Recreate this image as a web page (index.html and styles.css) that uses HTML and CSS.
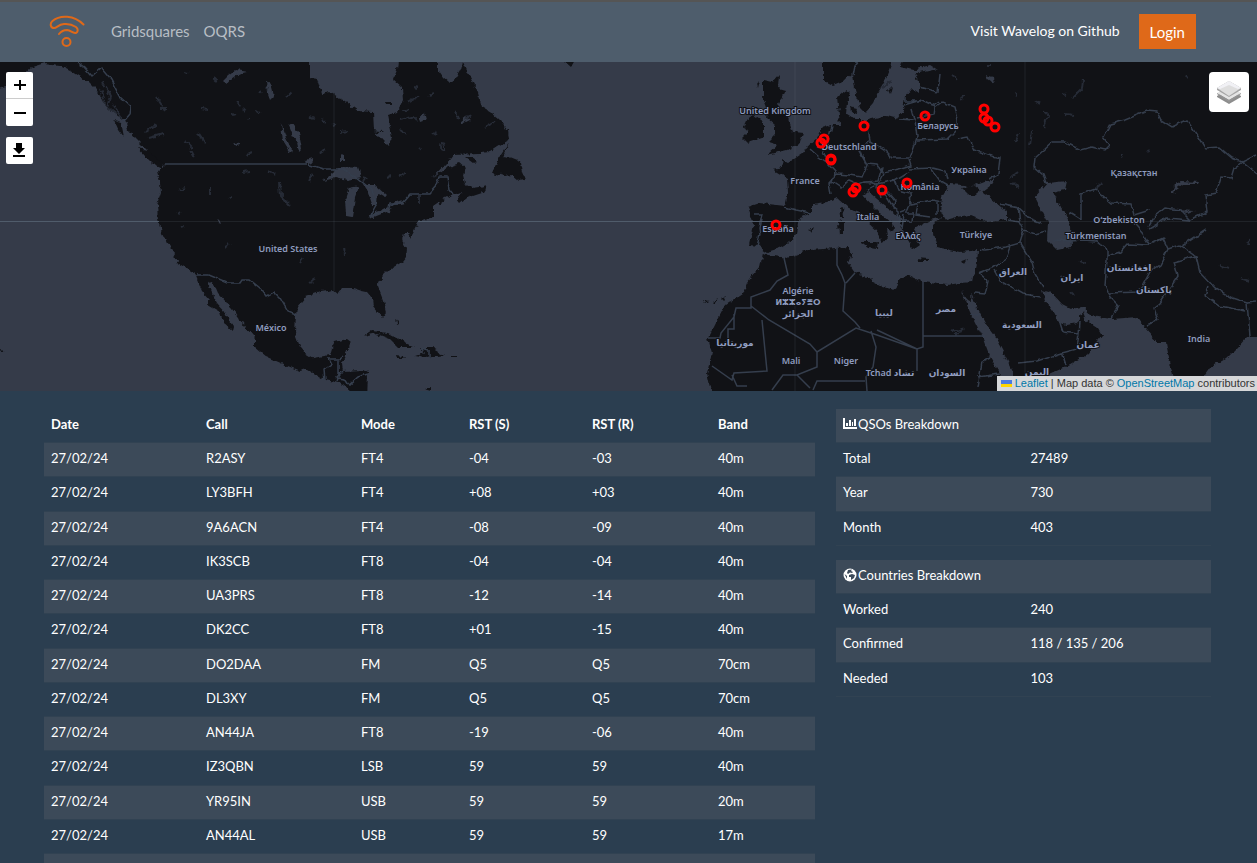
FILE: index.html
```html
<!DOCTYPE html>
<html lang="en">
<head>
<meta charset="utf-8">
<meta name="viewport" content="width=device-width, initial-scale=1">
<title>Wavelog</title>
<link rel="stylesheet" href="styles.css">
</head>
<body>
<header class="navbar">
  <a class="brand" href="#" aria-label="Wavelog">
    <svg width="36" height="34" viewBox="49 15 36 34" fill="none" stroke="#df6919" stroke-width="2" stroke-linecap="round"><path d="M83.500 24.500C74 15 60 14.500 52.500 21C49.500 23.500 50.500 28 54 28C57 28 58 24.500 64 24C69 23.500 73 25 76 27C79 29.500 77.500 33 75 33C72 33 71 30.500 67 30C63 30 61 31.500 59 34"/><circle cx="66.500" cy="42" r="4"/></svg>
  </a>
  <nav class="links"><a href="#">Gridsquares</a><a href="#">OQRS</a></nav>
  <a class="github" href="#">Visit Wavelog on Github</a>
  <button class="login" type="button">Login</button>
</header>

<section class="map" aria-label="Map">
  <svg class="world" viewBox="0 62 1257 329" preserveAspectRatio="xMidYMid slice">
    <defs>
      <filter id="coast" color-interpolation-filters="sRGB" filterUnits="userSpaceOnUse" x="-10" y="52" width="1280" height="350">
        <feTurbulence type="fractalNoise" baseFrequency="0.16" numOctaves="3" seed="4" result="n"/>
        <feDisplacementMap in="SourceGraphic" in2="n" scale="6" xChannelSelector="R" yChannelSelector="G"/>
        <feGaussianBlur stdDeviation="0.5"/>
      </filter>
      <filter id="border" color-interpolation-filters="sRGB" filterUnits="userSpaceOnUse" x="-10" y="52" width="1280" height="350">
        <feTurbulence type="fractalNoise" baseFrequency="0.12" numOctaves="2" seed="4" result="n"/>
        <feDisplacementMap in="SourceGraphic" in2="n" scale="5" xChannelSelector="R" yChannelSelector="G"/>
        <feGaussianBlur stdDeviation="0.4"/>
      </filter>
    </defs>
    <g filter="url(#coast)">
      <g class="land">
        <path d="M-10 50V90L6 86L12 76L22 76L32 67L45 63L60 65L72 71L80 76L88 82L96 90L102 100L108 108L116 114L125 120L128 130L135 138L143 146L150 153L160 162L165 166L157 170L160 182L161 193L157 205L158 220L163 236L170 246L177 262L187 268L194 272L197 280L202 291L210 300L208 305L220 312L223 322L233 331L234 327L230 322L225 312L217 303L212 293L207 282L213 281L218 293L227 303L235 313L245 327L255 338L255 347L267 357L283 364L300 371L307 369L317 375L325 380L335 382L343 385L350 391V400H367L368 373L363 370L343 371L342 363L347 353L351 342L347 339L335 342L332 348L330 355L313 358L305 353L300 347L295 333L296 315L297 307L305 297L320 292L333 290L338 294L343 288L353 288L362 291L367 292L372 298L373 307L382 318L386 313L383 300L378 287L382 278L392 268L402 262L406 257L407 248L402 240L404 232L408 232L410 238L416 227L418 222L433 217L433 207L443 200L453 195L462 192L457 200L460 204L467 198L482 193L487 185L480 187L473 188L465 183L463 175L465 167L460 163L448 167L433 178L447 163L453 155L480 154L488 153L497 147L509 140L508 130L500 120L492 113L482 107L478 93L470 77L463 62L461 70L456 78L450 83L443 77L438 70L438 50H399L397 70L393 80L402 88L403 100L397 112L388 115L392 137L388 146L382 140L374 130L373 112L358 111L343 100L330 92L322 94L317 78L310 77L310 50Z"/>
        <path d="M509 143L503 157L510 158L520 162L522 172L525 180L519 181L512 175L504 176L492 173L498 160ZM465 157L471 157L478 162L473 163ZM363 337L372 331L387 333L400 340L415 347L398 347L390 339L377 334ZM420 348L433 348L445 355L427 358L415 356L424 353ZM451 356H458V358H451ZM395 356L404 357L402 359H396ZM138 148L147 150L163 163L163 168L152 163L145 156ZM114 121L121 123L124 138L118 130ZM563 60H575L571 67ZM395 318L398 325L396 326ZM373 130L382 131L379 133ZM385 102H393V105H386ZM0 349L3 350L1 353ZM703 300L708 301L705 303ZM713 301L718 298L715 303ZM722 299L726 297L724 301ZM424 389L431 387V391Z"/>
        <path d="M748 207L760 203L785 206L788 193L787 178L772 169L783 167L782 160L788 163L803 153L807 147L817 138L822 128L832 125L840 125L839 115L837 97L847 90L850 92L847 103L846 113L857 120L867 120L887 115L898 118L903 110L905 97L913 88L920 93L920 87L915 73L933 69L938 70L930 65L913 70L900 67L905 50H1270V337L1247 337L1237 348L1227 358L1210 368L1205 375V400H1178L1172 370L1168 353L1166 342H1157L1147 330L1143 325L1137 317L1112 319L1098 317L1087 313L1085 307L1072 310L1062 305L1050 292L1042 290L1045 300L1052 310L1055 315L1058 323L1067 325L1077 323L1083 312L1086 320L1098 328L1102 335L1092 347L1088 354L1077 360L1065 367L1037 380L1020 386L1010 400H713L707 373L712 353L708 338L717 320L725 305L743 293L747 283L760 267L763 253L768 255L787 258L810 250L837 248L847 247L852 253L848 263L855 273L870 277L873 282L883 287L895 290L898 280L908 275L922 282L947 285L960 283L973 282L977 263L978 250L960 252L950 250L937 247L933 233L933 225L942 217L930 220L917 227L913 235L920 245L913 250L907 240L902 230L900 218L890 210L877 200L868 192L863 195L872 205L882 215L895 227L893 231L887 228L888 237L882 244L878 231L867 221L857 212L847 207L837 198L827 203L812 205L812 213L800 218L797 233L790 242L780 248L767 252L758 246L749 245L754 224Z"/>
        <path d="M763 80L772 82L779 74L778 88L785 90L778 105L787 115L793 132L803 133L800 143L787 150L767 155L778 145L768 142L775 135L775 125L767 118L768 110L763 97ZM753 115L763 122L763 138L747 143L742 138L748 132L743 122ZM823 50V80L833 85L845 80L853 73L855 90L860 107L865 112L873 103L878 92L887 77L892 65V50ZM850 106L858 108L857 114L851 112ZM888 90L892 86L890 94ZM860 242H878L877 249L868 248ZM838 222L844 221V234H839ZM840 209L843 207L844 218H841ZM917 258L928 259V261H918ZM960 262L968 259L965 264ZM809 231L813 229L811 232ZM757 84L760 80L758 88Z"/>
      </g>
      <g class="water">
        <path d="M323 181L333 173L343 166L358 167L362 178L347 181L335 178ZM345 200L349 188L359 186L355 197L352 217L346 216ZM363 185L375 185L386 195L384 197L377 193L376 205L372 205L368 193ZM369 217L376 212L391 208L389 212L374 218ZM388 205L402 200L405 203L390 206ZM288 126L293 123L299 132L302 149L299 152L297 142L292 136ZM281 123L286 138L293 152L290 153L283 142ZM228 76L236 70L247 72L238 74L231 79L226 85L222 82ZM266 80L272 88L274 96L270 100L267 92ZM340 154L344 155L344 161H340ZM305 160L312 158L313 164L306 165ZM419 118L424 112L426 120L420 122ZM460 122L466 117L470 120L462 124ZM234 141L239 145L236 146ZM217 218L222 223L218 222Z"/>
        <path d="M940 210L942 197L950 184L963 185L970 187L982 183L995 178L990 186L982 192L990 198L1007 212L1007 220L987 222L970 215L957 217L946 220ZM1035 197L1047 183L1067 181L1065 190L1053 193L1058 203L1065 213L1071 226L1072 247L1057 250L1047 240L1048 223L1040 207ZM961 291L968 300L972 302L971 293L975 303L987 326L995 337L1002 350L1013 372L1015 388L1007 385L990 357L983 338L970 312ZM1171 195L1174 187L1182 181L1200 182L1199 184L1183 184L1175 190L1174 194ZM986 76L993 78L994 84L988 80ZM1178 210L1195 211L1186 213Z"/>
      </g>
      <path class="land" d="M962 188L975 186L981 191L973 197L968 194Z"/>
      <path class="lakes" d="M185 72l3 1M156 97l10 15M160 109l7 0M201 109l7 1M217 82l-4-4M236 102l5 4M243 109l3 3M256 111l5 2M260 93l2-2M287 97l4-4M250 118l-2 2M233 115l3-1M247 155l4-2M198 133l7 11M185 140l8 8M145 132l12-8M149 138l14-4M243 173l8-1M267 171l9 4M280 182l1 14l9 10M309 181l4-7M309 117l5 2M322 119l5 4M332 125l4-1M340 132l8-1M400 120l12-3l4 4M408 102l9-5M413 87l5 1M430 96l4-2M400 130l6 4M418 147l4 3M443 143a2 4 0 1 0 .2 0M455 111l3 7M470 115l-4 5M485 127l9-5M419 195l0 8M398 176l8-4M386 178l6-3M366 177l-3 4M403 111l5-2M433 131l4 3M319 153l6-4M300 263l3-4M310 282l5-3M178 212l2 1M181 227l2-1M344 247l1 9M225 247l5-3M210 195l0-8M190 150l4 8M180 190l4-2M265 86l4 3M229 198l2-1M103 82l8 15l-3 10l9 7M100 90l6 16M113 105l10 13M1043 111l5 4l-4 12M1065 115l8 1M1074 97l8-8l1-10M1034 101l5 3M1010 178l8-7M1011 183l8 4M1030 145l2-14M1015 92l2 5M987 66l3 0M1148 152l2-2M1211 112l5-4M1123 155l-1 3M1095 189l6-5M1080 261l5 2M1060 277l7 3M1070 292l3 3M1219 265l10 3M1240 278l9 3M1248 245l2-5M951 329l9 3l3-4M955 334l6-2M838 110l4-1M890 80l-8 8M960 100l5-4M952 75l6 4M1018 133l-3 8M1062 94l4 1M1185 76l4 3"/>
    </g>
    <path class="borders" d="M165 164H307"/>
    <g class="borders" filter="url(#border)">
      <path d="M77 62L84 67L92 76L101 68L111 80L120 97L130 106L129 115L124 121M307 164L323 169L343 169L357 178L372 190L376 205L370 216L389 209L390 204H402L411 194H429L437 185L440 176H447L449 190L453 195M196 275H208L227 283H240L242 280H250L260 288L266 296L274 292L280 298L288 312L296 315M325 380L324 370L331 365L328 359H339V374L336 381M340 359L344 356M343 371L336 378L345 379L349 385L358 377L368 374M429 349V359M421 348L428 350"/>
      <path d="M785 207L796 210L811 213M754 214H762L759 228L760 235L757 246M810 149L819 157L828 163L836 172L832 182L841 188L849 180L858 184L863 182L878 184M817 147L823 151L827 160M832 125L827 145M867 122L870 140L859 151L867 165L862 177L849 175L837 174L829 183L831 195M870 141L884 150L892 158H910L915 144L917 137L915 120L898 119M861 151L866 164L878 165L883 173L898 170L911 166L909 160M882 167L878 181L864 182M884 174L877 187L880 198M867 190L878 184L895 180L908 172M877 193L888 192L895 200L893 210M895 180L899 190L910 193L911 204L932 200L942 202M909 169L931 168L940 181L947 185M911 198L907 210L901 212M918 204L916 215L930 217M905 213H913L912 221L901 221M884 192L893 207L899 212L900 220M903 105L920 100L935 107L942 102L954 107L957 119L957 130L948 139L917 140M920 87L938 92L940 74M917 118L934 114L935 107M915 120L912 109M957 139L968 137L974 150L988 155L1000 158L998 174L988 180M904 101H922L932 106L939 101M853 75L855 65L860 59M933 168L945 171L947 180M897 214L899 224M904 215L902 230M937 202V216"/>
      <path d="M1046 183L1043 175L1034 167L1035 158L1053 142H1065L1080 150L1092 147L1105 150L1109 146L1103 138L1110 124L1125 120L1147 111L1157 112L1161 120L1172 127L1187 120L1205 148L1219 147L1232 158L1242 162L1257 155M1242 162L1257 174M1242 162L1234 168L1231 178L1221 177L1216 193L1205 195L1207 212L1190 220L1180 210L1165 208L1155 216L1149 226M1081 219V194L1095 189L1111 203L1131 204L1134 215L1150 210M1070 212L1081 219M1000 204L1018 208L1029 218L1042 223M1020 222L1024 230L1035 234L1046 231M1018 208L1020 222L1007 220M1024 230L1020 243L1006 247L984 250L980 249M1020 243L1032 262L1035 274L1043 287M979 273L992 268L1005 260L1010 247M979 273L988 281L985 294L974 293M994 270L1000 281L1023 294L1041 297M1053 240L1071 241L1084 240L1096 241L1107 250L1107 260L1105 285L1110 297L1118 305L1111 319M1107 256L1120 252L1127 244L1148 245L1163 238L1168 249L1160 265L1150 272L1139 292L1108 293M1131 220L1143 234L1149 244M1149 229L1167 218L1190 220M1168 249L1180 245L1196 256L1174 262L1178 276L1160 303L1154 308L1158 320L1147 325M1206 230L1180 247M1196 256L1200 272L1215 288L1232 298L1247 303L1257 302M1208 287L1205 295L1220 306L1245 311M1247 303L1250 336M1060 323L1063 332L1079 334L1080 322M1079 334L1077 349L1062 353L1037 361L1018 363M1062 353L1066 365M980 314H970M978 387L982 362L990 358M977 377L1000 374"/>
    </g>
    <g class="borders">
      <path d="M784 258L788 275L777 281L770 290L751 297V308H736L734 317L721 333L720 338H708M751 306L769 320L810 344L817 352L856 328L877 335L917 349V354M734 314V329H728V338M762 320L767 371L734 373L732 380L712 366M837 248V265L842 275L845 283L843 311L855 322L860 328M846 283L855 273M877 330L917 349L923 347V282M923 336H985M871 331L876 347L873 367L866 377L867 391M817 352L817 367L797 375H783L772 390M797 375L810 388M813 390L817 381H865M917 354L917 371M732 375L737 386H747"/>
    </g>
    <path class="seam" d="M0 221.500H159M418 221.500H906"/>
    <path class="seam faint" d="M159 221.500H418M906 221.500H1257M334 94V291M795 62V391M1025 62V391"/>
    <g class="labels">
      <text x="288" y="252">United States</text><text x="271" y="331">México</text>
      <text x="775" y="114">United Kingdom</text><text x="805" y="184">France</text><text x="849" y="150">Deutschland</text>
      <text x="938" y="129">Беларусь</text><text x="969" y="173">Україна</text><text x="868" y="220">Italia</text>
      <text x="920" y="190">România</text><text x="778" y="232">España</text><text x="908" y="239">Ελλάς</text>
      <text x="976" y="238">Türkiye</text><text x="1134" y="176">Қазақстан</text><text x="1119" y="223">Oʻzbekiston</text>
      <text x="1096" y="239">Türkmenistan</text><text x="798" y="294">Algérie</text><text class="small" x="798" y="305">ⵍⵣⵣⴰⵢⴻⵔ</text>
      <text x="798" y="317">الجزائر</text><text x="884" y="316">ليبيا</text><text x="946" y="312">مصر</text>
      <text x="735" y="346">موريتانيا</text><text x="791" y="364">Mali</text><text x="846" y="364">Niger</text>
      <text x="890" y="376">Tchad تشاد</text><text x="947" y="376">السودان</text><text x="1013" y="275">العراق</text>
      <text x="1072" y="281">ایران</text><text x="1129" y="271">افغانستان</text><text x="1154" y="293">پاکستان</text>
      <text x="1022" y="328">السعودية</text><text x="1088" y="348">عمان</text><text x="1037" y="375">اليمن</text><text x="1199" y="342">India</text>
    </g>
    <g class="pins">
      <circle cx="984" cy="109" r="4"/><circle cx="984" cy="118" r="4"/><circle cx="988" cy="121" r="4"/><circle cx="995" cy="127" r="4"/>
      <circle cx="925" cy="116" r="4"/><circle cx="864" cy="126" r="4"/><circle cx="824" cy="139" r="4"/><circle cx="821" cy="143" r="4"/>
      <circle cx="831" cy="159" r="4"/><circle cx="831" cy="160" r="4"/><circle cx="856" cy="188" r="4"/><circle cx="853" cy="192" r="4"/>
      <circle cx="882" cy="190" r="4"/><circle cx="907" cy="183" r="4"/><circle cx="776" cy="225" r="4"/>
    </g>
  </svg>
  <div class="controls">
    <div class="zoom">
      <button type="button" aria-label="Zoom in"><svg width="27" height="26" viewBox="0 0 27 26"><path d="M8 13H20M14 8V18" stroke="#000" stroke-width="2"/></svg></button>
      <button type="button" aria-label="Zoom out"><svg width="27" height="27" viewBox="0 0 27 27"><path d="M8 14H20" stroke="#000" stroke-width="2"/></svg></button>
    </div>
    <button class="download" type="button" aria-label="Download"><svg width="27" height="27" viewBox="0 0 27 27"><path d="M10 6H16V11H19L13 17L7 11H10ZM7 18H19V20H7Z"/></svg></button>
  </div>
  <button class="layers" type="button" aria-label="Layers"><svg width="26" height="26" viewBox="0 0 26 26"><path d="M13 10L25 17V18L13 25L1 18V17Z" fill="#8d8d8d"/><path d="M13 8L25 14L13 21L1 14Z" fill="#e4e4e4"/><path d="M1 14L13 21L25 14V15L13 23L1 15Z" fill="#959595"/><path d="M13 2L25 9V11L13 18L1 11V9Z" fill="#a5a5a5"/><path d="M13 2L25 9L13 17L1 9Z" fill="#dedede"/><path d="M13 2L25 9L22 10L13 6L4 10L1 9Z" fill="#f1f1f5"/></svg></button>
  <div class="attribution"><svg width="11" height="7" viewBox="0 0 11 7"><path fill="#4c7be1" d="M0 0h11v4H0z"/><path fill="#ffd500" d="M0 4h11v3H0z"/></svg> <a href="#">Leaflet</a> | Map data © <a href="#">OpenStreetMap</a> contributors</div>
</section>

<main class="content">
  <table class="grid log">
    <colgroup><col class="c1"><col class="c1"><col class="c2"><col class="c3"><col class="c4"><col></colgroup>
    <thead><tr><th scope="col">Date</th><th scope="col">Call</th><th scope="col">Mode</th><th scope="col">RST (S)</th><th scope="col">RST (R)</th><th scope="col">Band</th></tr></thead>
    <tbody>
      <tr><td>27/02/24</td><td>R2ASY</td><td>FT4</td><td>-04</td><td>-03</td><td>40m</td></tr>
      <tr><td>27/02/24</td><td>LY3BFH</td><td>FT4</td><td>+08</td><td>+03</td><td>40m</td></tr>
      <tr><td>27/02/24</td><td>9A6ACN</td><td>FT4</td><td>-08</td><td>-09</td><td>40m</td></tr>
      <tr><td>27/02/24</td><td>IK3SCB</td><td>FT8</td><td>-04</td><td>-04</td><td>40m</td></tr>
      <tr><td>27/02/24</td><td>UA3PRS</td><td>FT8</td><td>-12</td><td>-14</td><td>40m</td></tr>
      <tr><td>27/02/24</td><td>DK2CC</td><td>FT8</td><td>+01</td><td>-15</td><td>40m</td></tr>
      <tr><td>27/02/24</td><td>DO2DAA</td><td>FM</td><td>Q5</td><td>Q5</td><td>70cm</td></tr>
      <tr><td>27/02/24</td><td>DL3XY</td><td>FM</td><td>Q5</td><td>Q5</td><td>70cm</td></tr>
      <tr><td>27/02/24</td><td>AN44JA</td><td>FT8</td><td>-19</td><td>-06</td><td>40m</td></tr>
      <tr><td>27/02/24</td><td>IZ3QBN</td><td>LSB</td><td>59</td><td>59</td><td>40m</td></tr>
      <tr><td>27/02/24</td><td>YR95IN</td><td>USB</td><td>59</td><td>59</td><td>20m</td></tr>
      <tr><td>27/02/24</td><td>AN44AL</td><td>USB</td><td>59</td><td>59</td><td>17m</td></tr>
      <tr><td>&nbsp;</td><td></td><td></td><td></td><td></td><td></td></tr>
    </tbody>
  </table>
  <aside class="stats">
    <table class="grid">
      <tbody>
        <tr><td colspan="2"><svg class="icon" width="14" height="12" viewBox="0 0 14 12" fill="#fff"><path d="M0 0H2V9H14V11H0ZM3 5H5V8H3ZM6 2H8V8H6ZM9 4H10V8H9ZM11 1H13V8H11Z"/></svg>QSOs Breakdown</td></tr>
        <tr><td>Total</td><td>27489</td></tr>
        <tr><td>Year</td><td>730</td></tr>
        <tr><td>Month</td><td>403</td></tr>
      </tbody>
    </table>
    <table class="grid">
      <tbody>
        <tr><td colspan="2"><svg class="icon globe" width="14" height="14" viewBox="0 0 14 14"><circle cx="7" cy="7" r="6.500" fill="#fff"/><path d="M5 2L9 1.500L8 3L10 4L9 5L7 4.500L5 6L4 5ZM6 7L9 6L12 7L11 10L8 12L8 9L6 9ZM1.500 6L4 8L4 11Z" fill="#3c4b5a"/></svg>Countries Breakdown</td></tr>
        <tr><td>Worked</td><td>240</td></tr>
        <tr><td>Confirmed</td><td>118 / 135 / 206</td></tr>
        <tr><td>Needed</td><td>103</td></tr>
      </tbody>
    </table>
  </aside>
</main>
</body>
</html>
```
FILE: styles.css
```css
* { box-sizing: border-box; }
body { margin: 0; background: #2b3e50; color: #fff; font: 13px/1.48 Lato, sans-serif; }
a { text-decoration: none; }
button { border: 0; padding: 0; cursor: pointer; }

.navbar { display: flex; align-items: center; height: 62px; padding: 0 61px 1px 49px; background: #4e5d6c; border-top: 2px solid #555; }
.brand { display: flex; }
.links { display: flex; gap: 14px; margin-left: 26px; font-size: 15px; }
.links a { color: #b8bec4; }
.github { margin-left: auto; margin-right: 19px; color: #fff; font-size: 14px; }
.login { height: 35px; padding: 0 11px; background: #df6919; color: #fff; font: 15px Lato, sans-serif; }

.map { position: relative; height: 329px; overflow: hidden; background: #353b49; }
.world { display: block; width: 100%; height: 100%; }
.land { fill: #111216; }
.water { fill: #353b49; }
.lakes { fill: none; stroke: #262b36; stroke-width: 2; }
.borders { fill: none; stroke: #353e4d; stroke-width: 1.5; }
.seam { stroke: #505c6b; }
.seam.faint { stroke: #7b8794; stroke-opacity: 0.15; }
.labels { fill: #8f9cbf; stroke: #111216; stroke-width: 2; paint-order: stroke; font: 600 9px "Noto Sans", "DejaVu Sans", sans-serif; text-anchor: middle; }
.labels .small { font-size: 8px; }
.pins { fill: none; stroke: #f00; stroke-width: 3; }
.controls { position: absolute; top: 10px; left: 6px; display: grid; gap: 11px; }
.controls button { display: block; width: 27px; background: #fff; }
.controls svg { display: block; }
.zoom { overflow: hidden; border-radius: 2px; }
.zoom button + button { border-top: 1px solid #ccc; }
.download { border-radius: 2px; }
.layers { position: absolute; top: 10px; right: 8px; display: grid; place-items: center; width: 40px; height: 40px; background: #fff; border-radius: 4px; }
.attribution { position: absolute; right: 0; bottom: 0; padding: 0 2px 0 4px; background: #d6d7d9; color: #333; font: 11px/15px "Liberation Sans", Arial, sans-serif; }
.attribution a { color: #0078a8; }

.content { display: grid; grid-template-columns: 771fr 375fr; gap: 21px; align-items: start; padding: 18px 46px 0 44px; }
.grid { width: 100%; border-collapse: separate; border-spacing: 0; table-layout: fixed; }
.grid th, .grid td { padding: 6px 7px 8px; border-bottom: 1px solid #314252; text-align: left; }
.log tbody tr:nth-child(odd), .stats tr:nth-child(odd) { background: #3c4a59; }
.c1 { width: 155px; }
.c2 { width: 108px; }
.c3 { width: 123px; }
.c4 { width: 126px; }
.stats { display: grid; gap: 14px; }
.icon { margin-right: 1px; vertical-align: -1px; }
.globe { vertical-align: -2px; }
```
